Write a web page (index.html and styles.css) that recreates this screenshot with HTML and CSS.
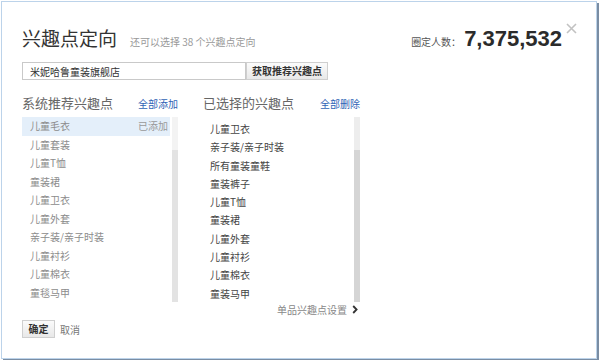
FILE: index.html
```html
<!DOCTYPE html>
<html lang="zh-CN">
<head>
  <meta charset="UTF-8">
  <meta name="viewport" content="width=device-width, initial-scale=1.0">
  <title>兴趣点定向</title>
  <link rel="stylesheet" href="styles.css">
</head>
<body>
  <div class="dialog">
    <span class="dialog-close">
      <svg width="11" height="11" viewBox="0 0 11 11"><path d="M1 1L10 10M10 1L1 10" stroke="#c2c2c2" stroke-width="1.6"/></svg>
    </span>

    <div class="dialog-head">
      <h2 class="dialog-title">兴趣点定向</h2>
      <span class="dialog-tip">还可以选择 38 个兴趣点定向</span>
      <div class="stats">
        <span class="stats-label">圈定人数：</span>
        <span class="stats-num">7,375,532</span>
      </div>
    </div>

    <div class="search-row">
      <input class="search-input" type="text" value="米妮哈鲁童装旗舰店">
      <button class="btn btn-fetch">获取推荐兴趣点</button>
    </div>

    <div class="columns">
      <!-- 系统推荐 -->
      <div class="col col-left">
        <div class="col-head">
          <span class="col-title">系统推荐兴趣点</span>
          <a class="col-link" href="#">全部添加</a>
        </div>
        <div class="list-box">
          <ul class="list list-rec">
            <li class="active"><span>儿童毛衣</span><em>已添加</em></li>
            <li><span>儿童套装</span></li>
            <li><span>儿童T恤</span></li>
            <li><span>童装裙</span></li>
            <li><span>儿童卫衣</span></li>
            <li><span>儿童外套</span></li>
            <li><span>亲子装/亲子时装</span></li>
            <li><span>儿童衬衫</span></li>
            <li><span>儿童棉衣</span></li>
            <li><span>童毯马甲</span></li>
          </ul>
          <div class="scrollbar"><div class="scrollbar-thumb"></div></div>
        </div>
      </div>

      <!-- 已选择 -->
      <div class="col col-right">
        <div class="col-head">
          <span class="col-title">已选择的兴趣点</span>
          <a class="col-link" href="#">全部删除</a>
        </div>
        <div class="list-box">
          <ul class="list list-sel">
            <li>儿童卫衣</li>
            <li>亲子装/亲子时装</li>
            <li>所有童装童鞋</li>
            <li>童装裤子</li>
            <li>儿童T恤</li>
            <li>童装裙</li>
            <li>儿童外套</li>
            <li>儿童衬衫</li>
            <li>儿童棉衣</li>
            <li>童装马甲</li>
          </ul>
          <div class="scrollbar scrollbar-dark"><div class="scrollbar-thumb"></div></div>
        </div>
        <a class="single-set" href="#">单品兴趣点设置
          <svg width="6" height="9" viewBox="0 0 6 9"><path d="M1.2 1L4.6 4.5L1.2 8" fill="none" stroke="#333" stroke-width="1.8"/></svg>
        </a>
      </div>
    </div>

    <div class="dialog-foot">
      <button class="btn btn-ok">确定</button>
      <a class="cancel" href="#">取消</a>
    </div>
  </div>
</body>
</html>
```

FILE: styles.css
```css
body {
  margin: 0;
  padding: 1px;
  background: #fff;
  font-family: "Noto Sans CJK SC", "Liberation Sans", sans-serif;
  color: #333;
}

ul {
  margin: 0;
  padding: 0;
  list-style: none;
}

a {
  text-decoration: none;
}

.dialog {
  position: relative;
  width: 540px;
  height: 356px;
  padding: 0 34px 0 20px;
  border: 1px solid #bcd3ea;
  box-shadow: 2px 2px 0 #7a8da3;
  background: #fff;
}

.dialog-close {
  position: absolute;
  top: 21px;
  right: 19px;
  line-height: 0;
}

/* 头部 */
.dialog-head {
  display: flex;
  align-items: baseline;
  padding-top: 24px;
}

.dialog-title {
  margin: 0;
  font-size: 19px;
  line-height: 24px;
  font-weight: normal;
  color: #333;
}

.dialog-tip {
  margin-left: 13px;
  font-size: 10px;
  color: #999;
}

.stats {
  margin-left: auto;
  display: flex;
  align-items: baseline;
}

.stats-label {
  font-size: 10px;
  color: #555;
}

.stats-num {
  margin-left: 3px;
  font-family: "Liberation Sans", Arial, sans-serif;
  font-size: 22px;
  line-height: 24px;
  font-weight: bold;
  color: #2b2b2b;
}

/* 搜索 */
.search-row {
  display: flex;
  margin-top: 11px;
}

.search-input {
  box-sizing: border-box;
  width: 224px;
  height: 18px;
  padding: 0 7px;
  border: 1px solid #c9c9c9;
  font-family: inherit;
  font-size: 10px;
  color: #333;
  outline: none;
}

.btn {
  box-sizing: border-box;
  height: 18px;
  padding: 0;
  border: 1px solid #cfcfcf;
  background: linear-gradient(#fbfbfb, #e8e8e8);
  font-family: inherit;
  font-size: 10px;
  font-weight: bold;
  color: #333;
  line-height: 16px;
  cursor: pointer;
}

.btn-fetch {
  width: 82px;
}

/* 两栏 */
.columns {
  display: flex;
  gap: 25px;
  margin-top: 13px;
}

.col-left {
  width: 156px;
}

.col-right {
  width: 157px;
}

.col-head {
  display: flex;
  align-items: baseline;
  justify-content: space-between;
  height: 20px;
  margin-bottom: 4px;
}

.col-title {
  font-size: 13px;
  line-height: 20px;
  color: #666;
}

.col-link {
  font-size: 10px;
  color: #2f63b5;
}

.list-box {
  display: flex;
  gap: 2px;
  height: 185px;
}

.list {
  flex: 1;
  font-size: 10px;
}

.list-rec li {
  display: flex;
  justify-content: space-between;
  height: 18.5px;
  line-height: 18.5px;
  padding: 0 2px 0 8px;
  color: #8c8c8c;
}

.list-rec li.active {
  background: #e4effa;
}

.list-rec em {
  font-style: normal;
  color: #999;
}

.list-sel {
  padding: 3px 0 0 7px;
}

.list-sel li {
  height: 18.3px;
  line-height: 18.3px;
  color: #444;
}

.scrollbar {
  display: flex;
  flex-direction: column;
  width: 6px;
  padding-top: 33px;
  background: #f3f3f3;
}

.scrollbar-thumb {
  flex: 1;
  background: #e3e3e3;
}

.scrollbar-dark {
  background: #ededed;
}

.scrollbar-dark .scrollbar-thumb {
  background: #d5d5d5;
}

.single-set {
  display: flex;
  align-items: center;
  justify-content: flex-end;
  gap: 5px;
  height: 14px;
  padding-right: 2px;
  font-size: 10px;
  color: #888;
}

/* 底部 */
.dialog-foot {
  display: flex;
  align-items: center;
  gap: 5px;
  margin-top: 4px;
}

.btn-ok {
  width: 33px;
  height: 18px;
}

.cancel {
  font-size: 10px;
  color: #777;
}
```
